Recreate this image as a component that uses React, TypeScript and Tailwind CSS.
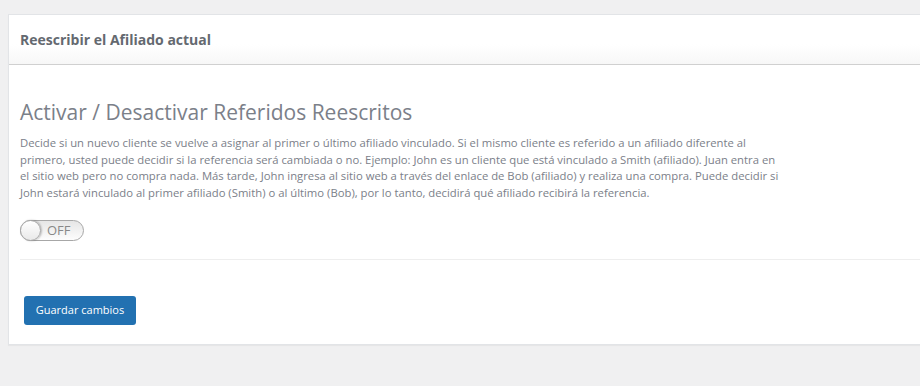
import { useState } from "react";

const description =
  "Decide si un nuevo cliente se vuelve a asignar al primer o último afiliado vinculado. Si el mismo cliente es referido a un afiliado diferente al primero, usted puede decidir si la referencia será cambiada o no. Ejemplo: John es un cliente que está vinculado a Smith (afiliado). Juan entra en el sitio web pero no compra nada. Más tarde, John ingresa al sitio web a través del enlace de Bob (afiliado) y realiza una compra. Puede decidir si John estará vinculado al primer afiliado (Smith) o al último (Bob), por lo tanto, decidirá qué afiliado recibirá la referencia.";

function Toggle() {
  const [on, setOn] = useState(false);
  return (
    <button
      type="button"
      onClick={() => setOn(!on)}
      className="relative flex h-[21px] w-[64px] items-center rounded-full border border-[#a7a7a7] bg-gradient-to-b from-[#e6e6e6] to-[#fdfdfd]"
    >
      <span
        className={`absolute top-[-1px] h-[21px] w-[21px] rounded-full border border-[#a7a7a7] bg-gradient-to-b from-white to-[#e9e9e9] shadow-[1px_0_2px_rgba(0,0,0,0.25)] ${
          on ? "right-[-1px]" : "left-[-1px]"
        }`}
      />
      <span
        className={`text-[13px] leading-none text-[#888888] ${on ? "pl-[12px]" : "pl-[26px]"}`}
      >
        {on ? "ON" : "OFF"}
      </span>
    </button>
  );
}

export default function App() {
  return (
    <div className="min-h-[386px] bg-[#f0f0f1] pl-[8px] pt-[14px] font-['Open_Sans',sans-serif]">
      <div className="border border-r-0 border-[#e2e4e7] bg-white shadow-[0_1px_1px_rgba(0,0,0,0.04)]">
        <div className="flex h-[50px] items-center border-b border-[#d0d0d0] bg-gradient-to-b from-white from-60% to-[#f7f7f7] px-[11px]">
          <h2 className="text-[14px] font-bold text-[#646970]">Reescribir el Afiliado actual</h2>
        </div>
        <div className="pl-[11px] pt-[33px] pb-[19px]">
          <h3 className="text-[21px] font-normal leading-[28px] text-[#7b8089]">
            Activar / Desactivar Referidos Reescritos
          </h3>
          <p className="mt-[9px] max-w-[760px] text-[11.3px] leading-[16.7px] text-[#7b8089]">
            {description}
          </p>
          <div className="mt-[18px]">
            <Toggle />
          </div>
          <div className="mt-[18px] border-t border-[#eeeeee]" />
          <div className="pt-[36px] pl-[4px]">
            <button
              type="button"
              className="h-[29px] w-[112px] rounded-[3px] bg-[#2271b1] text-[11px] text-white"
            >
              Guardar cambios
            </button>
          </div>
        </div>
      </div>
    </div>
  );
}
